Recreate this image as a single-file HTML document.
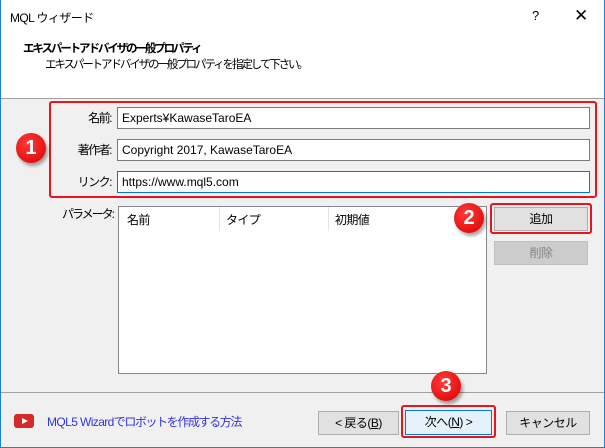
<!DOCTYPE html>
<html><head><meta charset="utf-8"><style>
*{box-sizing:border-box;margin:0;padding:0}
body{width:605px;height:448px;overflow:hidden;font-family:"Liberation Sans","Noto Sans CJK JP",sans-serif;font-size:12px;color:#000;position:relative;background:#f0f0f0}
.a{position:absolute}
.win{left:0;top:0;width:605px;height:448px;border:1px solid #1883d7;border-top:none}
.top{left:1px;top:0;width:603px;height:99px;background:#fff;border-bottom:1px solid #a0a0a0}
.inp{background:#fff;border:1px solid #7a7a7a;height:22px;padding:3px 4px;font-size:12px}
.lbl{text-align:right;width:80px;letter-spacing:-1.5px}
.btn{background:#e1e1e1;border:1px solid #adadad;text-align:center;font-size:12px;line-height:22px;letter-spacing:-0.5px}
.red{border:2px solid #e8141e;border-radius:3px}
.circ{width:30px;height:30px;border-radius:50%;background:radial-gradient(circle at 40% 35%,#ff3a3a,#d80000);color:#fff;font-weight:bold;font-size:20px;text-align:center;line-height:30px;box-shadow:2px 3px 3px rgba(0,0,0,.35)}
.n{letter-spacing:-0.6px}
.j{font-size:11.5px;letter-spacing:-2.1px}
</style></head><body>
<div class="a win"></div>
<div class="a top"></div>
<div class="a n" style="left:10px;top:9px">MQL ウィザード</div>
<div class="a" style="left:532px;top:8px;font-size:13px">?</div>
<div class="a" style="left:574px;top:6px;font-size:17px;font-weight:300">✕</div>
<div class="a j" style="left:23px;top:40px;font-weight:bold">エキスパートアドバイザの一般プロパティ</div>
<div class="a j" style="left:45px;top:56px">エキスパートアドバイザの一般プロパティを指定して下さい。</div>

<div class="a red" style="left:49px;top:101px;width:548px;height:97px"></div>
<div class="a lbl" style="left:31px;top:109px">名前:</div>
<div class="a lbl" style="left:31px;top:141px">著作者:</div>
<div class="a lbl" style="left:31px;top:173px">リンク:</div>
<div class="a inp" style="left:117px;top:107px;width:473px">Experts¥KawaseTaroEA</div>
<div class="a inp" style="left:117px;top:139px;width:473px">Copyright 2017, KawaseTaroEA</div>
<div class="a inp" style="left:117px;top:171px;width:473px;border-color:#0078d7">https://www.mql5.com</div>
<div class="a circ" style="left:16px;top:133px">1</div>

<div class="a" style="left:62px;top:205px;letter-spacing:-2px">パラメータ:</div>
<div class="a" style="left:118px;top:206px;width:369px;height:168px;background:#fff;border:1px solid #828790"></div>
<div class="a n" style="left:127px;top:211px">名前</div>
<div class="a n" style="left:226px;top:211px">タイプ</div>
<div class="a n" style="left:335px;top:211px">初期値</div>
<div class="a" style="left:219px;top:207px;width:1px;height:24px;background:#e5e5e5"></div>
<div class="a" style="left:328px;top:207px;width:1px;height:24px;background:#e5e5e5"></div>
<div class="a red" style="left:490px;top:203px;width:102px;height:31px"></div>
<div class="a btn" style="left:494px;top:207px;width:94px;height:24px">追加</div>
<div class="a btn" style="left:494px;top:241px;width:94px;height:24px;background:#cccccc;border-color:#bfbfbf;color:#838383">削除</div>
<div class="a circ" style="left:454px;top:203px">2</div>

<div class="a" style="left:1px;top:392px;width:603px;height:1px;background:#a0a0a0"></div>
<div class="a" style="left:14px;top:414px;width:20px;height:14px;background:#d42a2a;border-radius:3px"></div>
<div class="a" style="left:22px;top:418px;width:0;height:0;border-left:6px solid #fff;border-top:3px solid transparent;border-bottom:3px solid transparent"></div>
<div class="a" style="left:47px;top:413px;color:#3333e0;white-space:nowrap"><span class="n">MQL5 Wizard</span><span style="letter-spacing:-1.4px">でロボットを作成する方法</span></div>
<div class="a btn" style="left:318px;top:411px;width:81px;height:24px">&lt; 戻る(<u>B</u>)</div>
<div class="a red" style="left:401px;top:405px;width:95px;height:33px"></div>
<div class="a btn" style="left:405px;top:410px;width:87px;height:25px;background:#e5f1fb;border-color:#0078d7">次へ(<u>N</u>) &gt;</div>
<div class="a btn" style="left:506px;top:411px;width:84px;height:24px">キャンセル</div>
<div class="a circ" style="left:431px;top:371px">3</div>
</body></html>
